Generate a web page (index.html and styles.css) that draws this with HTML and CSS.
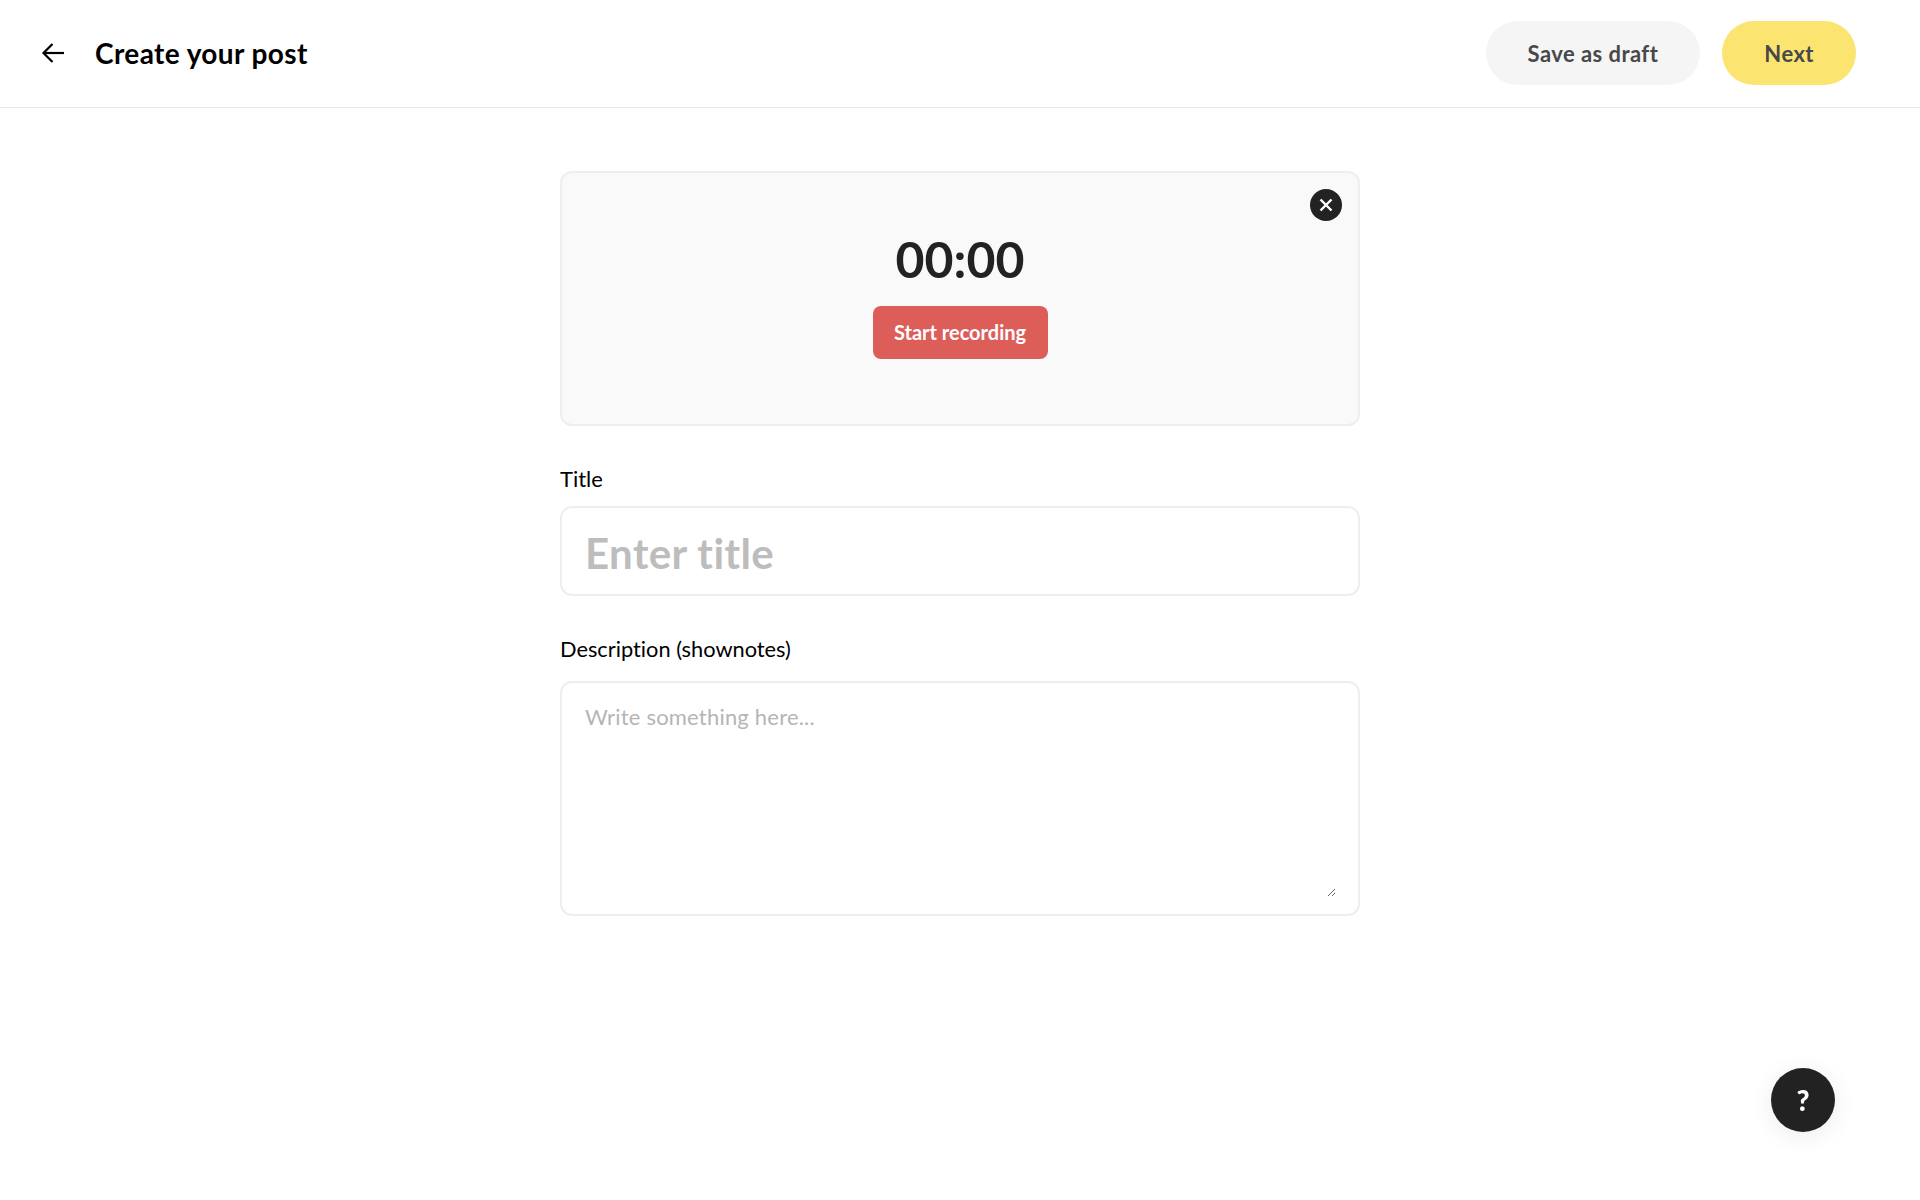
FILE: index.html
```html
<!DOCTYPE html>
<html lang="en">
<head>
<meta charset="UTF-8">
<title>Create your post</title>
<link rel="stylesheet" href="styles.css">
</head>
<body>
<header class="topbar">
  <div class="topbar-left">
    <a class="back" href="#" aria-label="Back">
      <svg width="24" height="24" viewBox="0 0 24 24" fill="none" stroke="#000" stroke-width="2.2">
        <path d="M23 12H2.5"/>
        <path d="M11.5 3L2.5 12l9 9"/>
      </svg>
    </a>
    <h1>Create your post</h1>
  </div>
  <div class="topbar-right">
    <button class="pill pill-grey">Save as draft</button>
    <button class="pill pill-yellow">Next</button>
  </div>
</header>

<main class="form">
  <section class="recorder">
    <button class="close" aria-label="Close">
      <svg width="14" height="14" viewBox="0 0 14 14" fill="none" stroke="#fff" stroke-width="2.4">
        <path d="M1.5 1.5l11 11"/>
        <path d="M12.5 1.5l-11 11"/>
      </svg>
    </button>
    <div class="timer">00:00</div>
    <button class="record">Start recording</button>
  </section>

  <label class="field-label" for="title">Title</label>
  <input class="title-input" id="title" type="text" placeholder="Enter title">

  <label class="field-label label-desc" for="desc">Description (shownotes)</label>
  <div class="desc-box">
    <textarea class="desc-input" id="desc" placeholder="Write something here..."></textarea>
  </div>
</main>

<button class="help" aria-label="Help">?</button>
</body>
</html>
```

FILE: styles.css
```css
body {
  margin: 0;
  font-family: 'Lato', sans-serif;
  font-variant-ligatures: none;
  background: #fff;
  color: #000;
}
button {
  font-family: inherit;
  border: none;
  cursor: pointer;
}
.topbar {
  display: flex;
  align-items: center;
  justify-content: space-between;
  height: 106px;
  padding: 0 64px 1px 41px;
  border-bottom: 1px solid #e6e6e6;
}
.topbar-left {
  display: flex;
  align-items: center;
  gap: 30px;
}
.back {
  display: flex;
}
h1 {
  margin: 0;
  font-size: 28px;
  font-weight: 700;
  letter-spacing: 0.4px;
  color: #000;
}
.topbar-right {
  display: flex;
  gap: 22px;
}
.pill {
  height: 64px;
  border-radius: 32px;
  padding: 0 42px;
  font-size: 22px;
  font-weight: 700;
  letter-spacing: 0.45px;
  color: #484848;
}
.pill-grey {
  background: #f5f5f5;
}
.pill-yellow {
  background: #fce470;
}
.form {
  display: flex;
  flex-direction: column;
  width: 800px;
  margin: 63px auto 0;
}
.recorder {
  position: relative;
  display: flex;
  flex-direction: column;
  align-items: center;
  box-sizing: border-box;
  height: 255px;
  padding-top: 55px;
  background: #f9f9f9;
  border: 2px solid #eeeeee;
  border-radius: 12px;
}
.close {
  position: absolute;
  top: 16px;
  right: 16px;
  display: flex;
  align-items: center;
  justify-content: center;
  width: 32px;
  height: 32px;
  padding: 0;
  border-radius: 50%;
  background: #222;
}
.timer {
  font-size: 50px;
  line-height: 62px;
  font-weight: 700;
  color: #222;
}
.record {
  width: 175px;
  height: 53px;
  margin-top: 16px;
  padding: 0 0 2px;
  border-radius: 8px;
  background: #dd5d59;
  color: #fff;
  font-size: 20px;
  font-weight: 700;
}
.field-label {
  margin-top: 39px;
  margin-bottom: 14px;
  font-size: 22px;
  line-height: 27px;
  color: #000;
}
.label-desc {
  margin-bottom: 19px;
  font-size: 21.8px;
}
.title-input {
  box-sizing: border-box;
  width: 100%;
  height: 90px;
  padding: 4px 23px 0;
  background: #fff;
  border: 2px solid #eeeeee;
  border-radius: 12px;
  font-family: inherit;
  font-size: 42px;
  font-weight: 700;
  font-variant-ligatures: none;
  letter-spacing: 0.4px;
  outline: none;
}
.title-input::placeholder {
  color: #bdbdbd;
}
.desc-box {
  display: flex;
  box-sizing: border-box;
  height: 235px;
  padding: 20px 22px 17px 23px;
  background: #fff;
  border: 2px solid #eeeeee;
  border-radius: 12px;
}
.desc-input {
  flex: 1;
  padding: 0;
  border: none;
  background: transparent;
  font-family: inherit;
  font-size: 22px;
  font-variant-ligatures: none;
  letter-spacing: 0.2px;
  outline: none;
}
.desc-input::placeholder {
  color: #b5b5b5;
}
.help {
  position: fixed;
  left: 1771px;
  top: 1068px;
  width: 64px;
  height: 64px;
  border-radius: 50%;
  background: #222;
  color: #fff;
  font-size: 28px;
  font-weight: 900;
  box-shadow: 0 4px 24px rgba(0, 0, 0, 0.08);
}
```
